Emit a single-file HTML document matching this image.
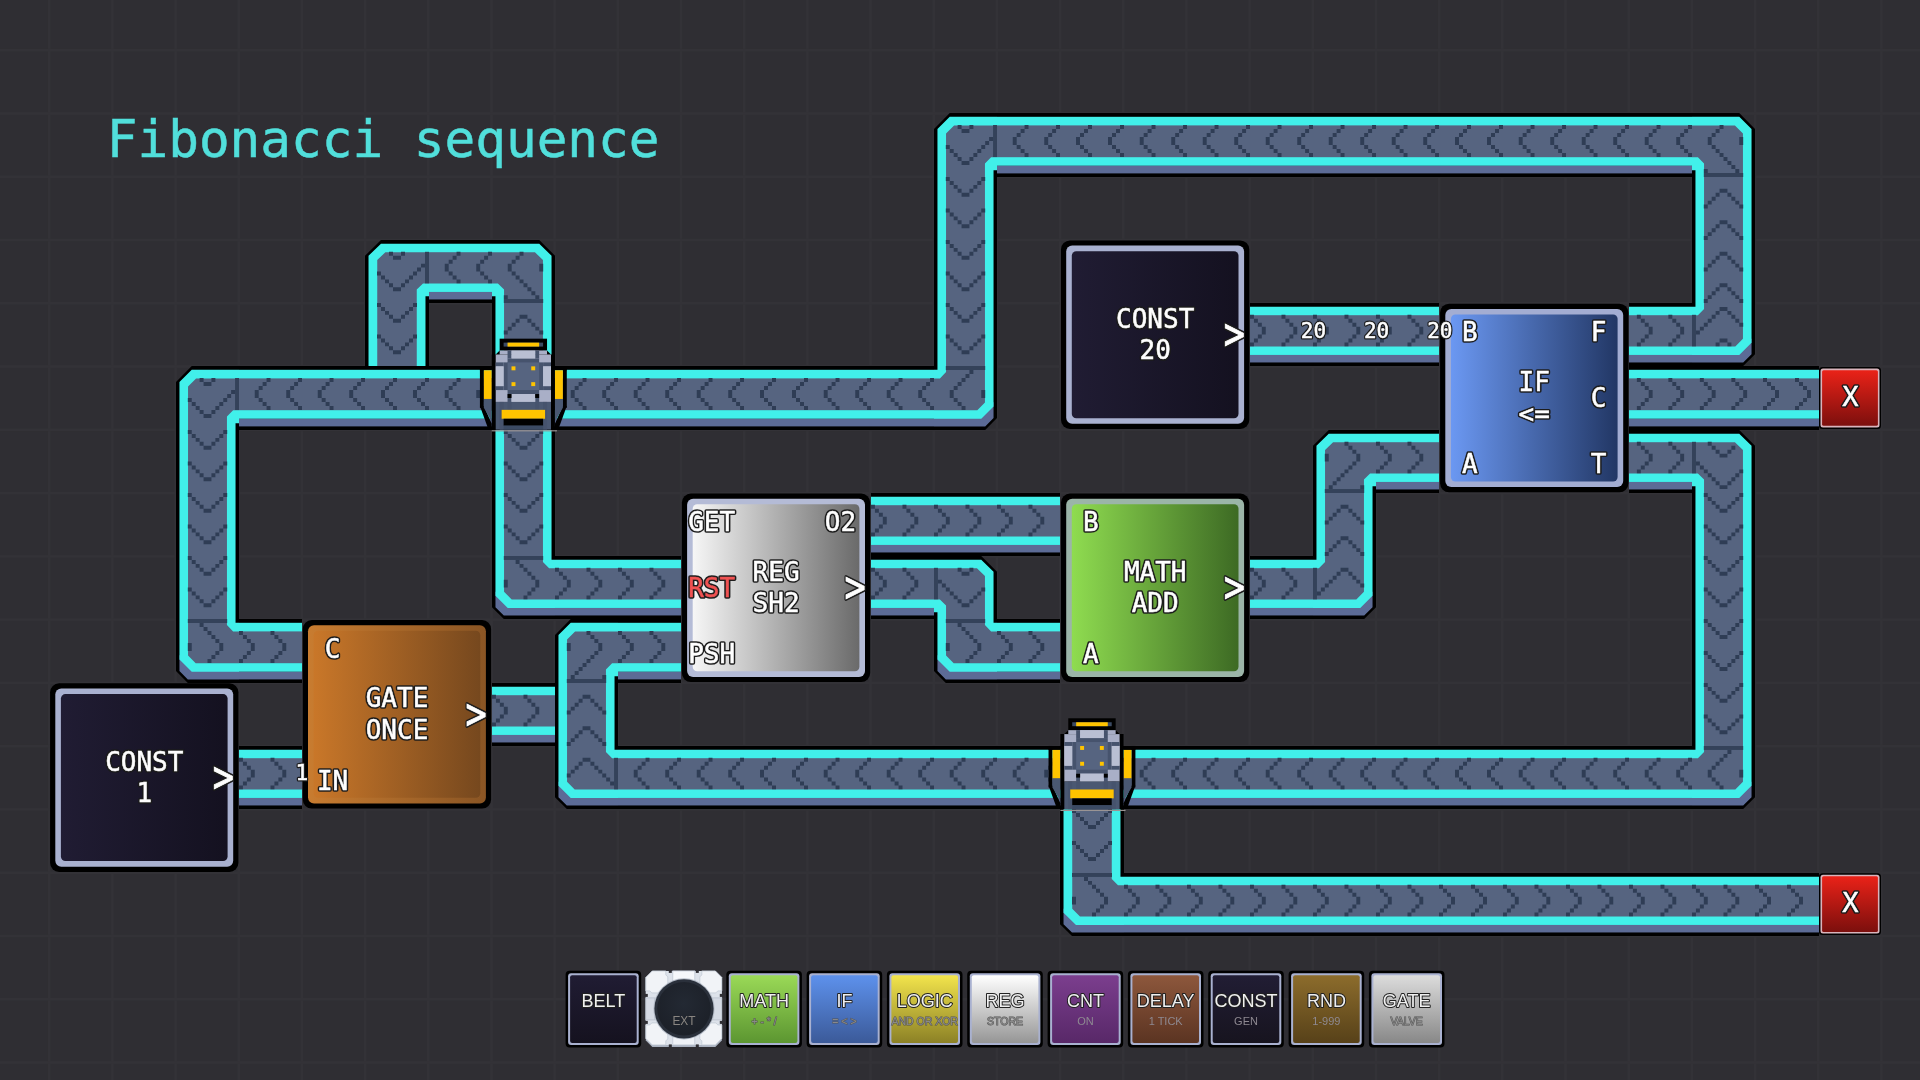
<!DOCTYPE html>
<html><head><meta charset="utf-8"><title>Fibonacci sequence</title>
<style>
html,body{margin:0;padding:0;background:#2f2e33;overflow:hidden}
svg{display:block}
text{font-family:"DejaVu Sans Mono","Liberation Mono",monospace}
.o{fill:#1d1d1d;stroke:#1d1d1d;stroke-width:3.6px;stroke-linejoin:round}
.o2{fill:#1d1d1d;stroke:#1d1d1d;stroke-width:3px;stroke-linejoin:round}
.f{stroke-width:0.5px}
.oa{fill:#1d1d1d;stroke:#1d1d1d;stroke-width:3.6px;stroke-linejoin:round}
.fa{fill:#fff;stroke:#fff;stroke-width:0.8px}
.t{stroke:#52e0dc;stroke-width:0.5px}
.s{font-family:"Liberation Sans",sans-serif}
.so{paint-order:stroke;stroke:#222;stroke-width:2px;stroke-linejoin:round}
.so2{paint-order:stroke;stroke:#555;stroke-width:1px}
</style></head><body>
<svg width="1920" height="1080" viewBox="0 0 1920 1080">
<defs>
<g id="hL"><rect x="0" y="0" width="16" height="16" fill="#000"/><rect x="0" y="0.95" width="16" height="12.25" fill="#41f0ea"/><rect x="0" y="3.1" width="16" height="7.95" fill="#566480"/><rect x="0" y="13.2" width="16" height="1.9" fill="#5c6b96"/><path d="M4 6h1v1h-1zM4 7h1v1h-1zM5 5h1v1h-1zM5 8h1v1h-1zM6 4h1v1h-1zM6 9h1v1h-1zM7 3h1v1h-1zM7 10h1v1h-1zM12 6h1v1h-1zM12 7h1v1h-1zM13 5h1v1h-1zM13 8h1v1h-1zM14 4h1v1h-1zM14 9h1v1h-1zM15 3h1v1h-1zM15 10h1v1h-1z" fill="#2f3d55"/></g>
<g id="hR"><rect x="0" y="0" width="16" height="16" fill="#000"/><rect x="0" y="0.95" width="16" height="12.25" fill="#41f0ea"/><rect x="0" y="3.1" width="16" height="7.95" fill="#566480"/><rect x="0" y="13.2" width="16" height="1.9" fill="#5c6b96"/><path d="M0 3h1v1h-1zM0 10h1v1h-1zM1 4h1v1h-1zM1 9h1v1h-1zM2 5h1v1h-1zM2 8h1v1h-1zM3 6h1v1h-1zM3 7h1v1h-1zM8 3h1v1h-1zM8 10h1v1h-1zM9 4h1v1h-1zM9 9h1v1h-1zM10 5h1v1h-1zM10 8h1v1h-1zM11 6h1v1h-1zM11 7h1v1h-1z" fill="#2f3d55"/></g>
<g id="vU"><rect x="0" y="0" width="16" height="16" fill="#000"/><rect x="0.88" y="0" width="14.24" height="16" fill="#41f0ea"/><rect x="3.06" y="0" width="9.88" height="16" fill="#566480"/><path d="M3 7h1v1h-1zM3 15h1v1h-1zM4 6h1v1h-1zM4 14h1v1h-1zM5 5h1v1h-1zM5 13h1v1h-1zM6 4h1v1h-1zM6 12h1v1h-1zM7 3h1v1h-1zM7 11h1v1h-1zM8 3h1v1h-1zM8 11h1v1h-1zM9 4h1v1h-1zM9 12h1v1h-1zM10 5h1v1h-1zM10 13h1v1h-1zM11 6h1v1h-1zM11 14h1v1h-1zM12 7h1v1h-1zM12 15h1v1h-1z" fill="#2f3d55"/></g>
<g id="vD"><rect x="0" y="0" width="16" height="16" fill="#000"/><rect x="0.88" y="0" width="14.24" height="16" fill="#41f0ea"/><rect x="3.06" y="0" width="9.88" height="16" fill="#566480"/><path d="M3 0h1v1h-1zM3 8h1v1h-1zM4 1h1v1h-1zM4 9h1v1h-1zM5 2h1v1h-1zM5 10h1v1h-1zM6 3h1v1h-1zM6 11h1v1h-1zM7 4h1v1h-1zM7 12h1v1h-1zM8 4h1v1h-1zM8 12h1v1h-1zM9 3h1v1h-1zM9 11h1v1h-1zM10 2h1v1h-1zM10 10h1v1h-1zM11 1h1v1h-1zM11 9h1v1h-1zM12 0h1v1h-1zM12 8h1v1h-1z" fill="#2f3d55"/></g>
<g id="hL_2"><rect x="0" y="0" width="16" height="16" fill="#000"/><rect x="0" y="0.95" width="16" height="12.25" fill="#41f0ea"/><rect x="0" y="3.1" width="16" height="7.95" fill="#566480"/><rect x="0" y="13.2" width="16" height="1.9" fill="#5c6b96"/><path d="M2 6h1v1h-1zM2 7h1v1h-1zM3 5h1v1h-1zM3 8h1v1h-1zM4 4h1v1h-1zM4 9h1v1h-1zM5 3h1v1h-1zM5 10h1v1h-1zM10 6h1v1h-1zM10 7h1v1h-1zM11 5h1v1h-1zM11 8h1v1h-1zM12 4h1v1h-1zM12 9h1v1h-1zM13 3h1v1h-1zM13 10h1v1h-1z" fill="#2f3d55"/></g>
<g id="hR_2"><rect x="0" y="0" width="16" height="16" fill="#000"/><rect x="0" y="0.95" width="16" height="12.25" fill="#41f0ea"/><rect x="0" y="3.1" width="16" height="7.95" fill="#566480"/><rect x="0" y="13.2" width="16" height="1.9" fill="#5c6b96"/><path d="M2 3h1v1h-1zM2 10h1v1h-1zM3 4h1v1h-1zM3 9h1v1h-1zM4 5h1v1h-1zM4 8h1v1h-1zM5 6h1v1h-1zM5 7h1v1h-1zM10 3h1v1h-1zM10 10h1v1h-1zM11 4h1v1h-1zM11 9h1v1h-1zM12 5h1v1h-1zM12 8h1v1h-1zM13 6h1v1h-1zM13 7h1v1h-1z" fill="#2f3d55"/></g>
<g id="vU_2"><rect x="0" y="0" width="16" height="16" fill="#000"/><rect x="0.88" y="0" width="14.24" height="16" fill="#41f0ea"/><rect x="3.06" y="0" width="9.88" height="16" fill="#566480"/><path d="M3 5h1v1h-1zM3 13h1v1h-1zM4 4h1v1h-1zM4 12h1v1h-1zM5 3h1v1h-1zM5 11h1v1h-1zM6 2h1v1h-1zM6 10h1v1h-1zM7 1h1v1h-1zM7 9h1v1h-1zM8 1h1v1h-1zM8 9h1v1h-1zM9 2h1v1h-1zM9 10h1v1h-1zM10 3h1v1h-1zM10 11h1v1h-1zM11 4h1v1h-1zM11 12h1v1h-1zM12 5h1v1h-1zM12 13h1v1h-1z" fill="#2f3d55"/></g>
<g id="vD_2"><rect x="0" y="0" width="16" height="16" fill="#000"/><rect x="0.88" y="0" width="14.24" height="16" fill="#41f0ea"/><rect x="3.06" y="0" width="9.88" height="16" fill="#566480"/><path d="M3 2h1v1h-1zM3 10h1v1h-1zM4 3h1v1h-1zM4 11h1v1h-1zM5 4h1v1h-1zM5 12h1v1h-1zM6 5h1v1h-1zM6 13h1v1h-1zM7 6h1v1h-1zM7 14h1v1h-1zM8 6h1v1h-1zM8 14h1v1h-1zM9 5h1v1h-1zM9 13h1v1h-1zM10 4h1v1h-1zM10 12h1v1h-1zM11 3h1v1h-1zM11 11h1v1h-1zM12 2h1v1h-1zM12 10h1v1h-1z" fill="#2f3d55"/></g>
<g id="cDR_D"><polygon points="4,0 16,0 16,16 0,16 0,4" fill="#000"/><polygon points="4,0.95 16,0.95 16,14.3 15.12,14.3 15.12,16 0.88,16 0.88,4" fill="#41f0ea"/><polygon points="5.1,3.1 16,3.1 16,11.05 14.5,11.05 12.94,12.6 12.94,16 3.06,16 3.06,5.1" fill="#566480"/><rect x="15" y="3" width="1" height="8" fill="#34425a"/><path d="M3 8h1v1h-1zM4 9h1v1h-1zM5 10h1v1h-1zM6 3h1v1h-1zM6 11h1v1h-1zM7 4h1v1h-1zM7 12h1v1h-1zM8 4h1v1h-1zM8 12h1v1h-1zM9 3h1v1h-1zM9 11h1v1h-1zM10 10h1v1h-1zM11 9h1v1h-1zM12 8h1v1h-1zM13 7h1v1h-1zM14 6h1v1h-1z" fill="#2f3d55"/></g>
<g id="cDR_R"><polygon points="4,0 16,0 16,16 0,16 0,4" fill="#000"/><polygon points="4,0.95 16,0.95 16,14.3 15.12,14.3 15.12,16 0.88,16 0.88,4" fill="#41f0ea"/><polygon points="5.1,3.1 16,3.1 16,11.05 14.5,11.05 12.94,12.6 12.94,16 3.06,16 3.06,5.1" fill="#566480"/><rect x="3" y="15" width="10" height="1" fill="#34425a"/><path d="M3 6h1v1h-1zM3 7h1v1h-1zM4 14h1v1h-1zM5 13h1v1h-1zM6 12h1v1h-1zM7 11h1v1h-1zM8 3h1v1h-1zM8 10h1v1h-1zM9 4h1v1h-1zM9 9h1v1h-1zM10 5h1v1h-1zM10 8h1v1h-1zM11 6h1v1h-1zM11 7h1v1h-1zM12 14h1v1h-1z" fill="#2f3d55"/></g>
<g id="cDL_D"><polygon points="12,0 0,0 0,16 16,16 16,4" fill="#000"/><polygon points="12,0.95 0,0.95 0,14.3 0.88,14.3 0.88,16 15.12,16 15.12,4" fill="#41f0ea"/><polygon points="10.9,3.1 0,3.1 0,11.05 1.5,11.05 3.06,12.6 3.06,16 12.94,16 12.94,5.1" fill="#566480"/><rect x="0" y="3" width="1" height="8" fill="#34425a"/><path d="M1 6h1v1h-1zM2 7h1v1h-1zM3 8h1v1h-1zM4 9h1v1h-1zM5 10h1v1h-1zM6 3h1v1h-1zM6 11h1v1h-1zM7 4h1v1h-1zM7 12h1v1h-1zM8 4h1v1h-1zM8 12h1v1h-1zM9 3h1v1h-1zM9 11h1v1h-1zM10 10h1v1h-1zM11 9h1v1h-1zM12 8h1v1h-1z" fill="#2f3d55"/></g>
<g id="cDL_L"><polygon points="12,0 0,0 0,16 16,16 16,4" fill="#000"/><polygon points="12,0.95 0,0.95 0,14.3 0.88,14.3 0.88,16 15.12,16 15.12,4" fill="#41f0ea"/><polygon points="10.9,3.1 0,3.1 0,11.05 1.5,11.05 3.06,12.6 3.06,16 12.94,16 12.94,5.1" fill="#566480"/><rect x="3" y="15" width="10" height="1" fill="#34425a"/><path d="M3 14h1v1h-1zM4 6h1v1h-1zM4 7h1v1h-1zM5 5h1v1h-1zM5 8h1v1h-1zM6 4h1v1h-1zM6 9h1v1h-1zM7 3h1v1h-1zM7 10h1v1h-1zM8 11h1v1h-1zM9 12h1v1h-1zM10 13h1v1h-1zM11 14h1v1h-1zM12 6h1v1h-1zM12 7h1v1h-1z" fill="#2f3d55"/></g>
<g id="cUR_U"><polygon points="0,0 16,0 16,16 3,16 0,13" fill="#000"/><polygon points="0.88,9 0.88,13 3,15.1 16,15.1 16,12 4,12" fill="#5c6b96"/><polygon points="0.88,0 15.12,0 15.12,0.95 16,0.95 16,13.2 4,13.2 0.88,10.1" fill="#41f0ea"/><polygon points="3.06,0 12.94,0 12.94,1.5 14.5,3.1 16,3.1 16,11.05 5,11.05 3.06,9.1" fill="#566480"/><rect x="15" y="3" width="1" height="8" fill="#34425a"/><path d="M3 7h1v1h-1zM4 6h1v1h-1zM5 5h1v1h-1zM6 4h1v1h-1zM7 3h1v1h-1zM8 3h1v1h-1zM9 4h1v1h-1zM10 5h1v1h-1zM11 6h1v1h-1zM12 7h1v1h-1zM13 8h1v1h-1zM14 9h1v1h-1z" fill="#2f3d55"/></g>
<g id="cUR_R"><polygon points="0,0 16,0 16,16 3,16 0,13" fill="#000"/><polygon points="0.88,9 0.88,13 3,15.1 16,15.1 16,12 4,12" fill="#5c6b96"/><polygon points="0.88,0 15.12,0 15.12,0.95 16,0.95 16,13.2 4,13.2 0.88,10.1" fill="#41f0ea"/><polygon points="3.06,0 12.94,0 12.94,1.5 14.5,3.1 16,3.1 16,11.05 5,11.05 3.06,9.1" fill="#566480"/><rect x="3" y="0" width="10" height="1" fill="#34425a"/><path d="M3 6h1v1h-1zM3 7h1v1h-1zM6 1h1v1h-1zM7 2h1v1h-1zM8 3h1v1h-1zM8 10h1v1h-1zM9 4h1v1h-1zM9 9h1v1h-1zM10 5h1v1h-1zM10 8h1v1h-1zM11 6h1v1h-1zM11 7h1v1h-1z" fill="#2f3d55"/></g>
<g id="cUL_U"><polygon points="16,0 0,0 0,16 13,16 16,13" fill="#000"/><polygon points="15.12,9 15.12,13 13,15.1 0,15.1 0,12 12,12" fill="#5c6b96"/><polygon points="15.12,0 0.88,0 0.88,0.95 0,0.95 0,13.2 12,13.2 15.12,10.1" fill="#41f0ea"/><polygon points="12.94,0 3.06,0 3.06,1.5 1.5,3.1 0,3.1 0,11.05 11,11.05 12.94,9.1" fill="#566480"/><rect x="0" y="3" width="1" height="8" fill="#34425a"/><path d="M1 9h1v1h-1zM2 8h1v1h-1zM3 7h1v1h-1zM4 6h1v1h-1zM5 5h1v1h-1zM6 4h1v1h-1zM7 3h1v1h-1zM8 3h1v1h-1zM9 4h1v1h-1zM10 5h1v1h-1zM11 6h1v1h-1zM12 7h1v1h-1z" fill="#2f3d55"/></g>
<g id="cUL_L"><polygon points="16,0 0,0 0,16 13,16 16,13" fill="#000"/><polygon points="15.12,9 15.12,13 13,15.1 0,15.1 0,12 12,12" fill="#5c6b96"/><polygon points="15.12,0 0.88,0 0.88,0.95 0,0.95 0,13.2 12,13.2 15.12,10.1" fill="#41f0ea"/><polygon points="12.94,0 3.06,0 3.06,1.5 1.5,3.1 0,3.1 0,11.05 11,11.05 12.94,9.1" fill="#566480"/><rect x="3" y="0" width="10" height="1" fill="#34425a"/><path d="M4 6h1v1h-1zM4 7h1v1h-1zM5 5h1v1h-1zM5 8h1v1h-1zM6 4h1v1h-1zM6 9h1v1h-1zM7 3h1v1h-1zM7 10h1v1h-1zM8 2h1v1h-1zM9 1h1v1h-1zM12 6h1v1h-1zM12 7h1v1h-1z" fill="#2f3d55"/></g>
<g id="cUL_U_2"><polygon points="16,0 0,0 0,16 13,16 16,13" fill="#000"/><polygon points="15.12,9 15.12,13 13,15.1 0,15.1 0,12 12,12" fill="#5c6b96"/><polygon points="15.12,0 0.88,0 0.88,0.95 0,0.95 0,13.2 12,13.2 15.12,10.1" fill="#41f0ea"/><polygon points="12.94,0 3.06,0 3.06,1.5 1.5,3.1 0,3.1 0,11.05 11,11.05 12.94,9.1" fill="#566480"/><rect x="0" y="3" width="1" height="8" fill="#34425a"/><path d="M1 7h1v1h-1zM2 6h1v1h-1zM3 5h1v1h-1zM4 4h1v1h-1zM5 3h1v1h-1zM6 2h1v1h-1zM6 10h1v1h-1zM7 1h1v1h-1zM7 9h1v1h-1zM8 1h1v1h-1zM8 9h1v1h-1zM9 2h1v1h-1zM9 10h1v1h-1zM10 3h1v1h-1zM11 4h1v1h-1zM12 5h1v1h-1z" fill="#2f3d55"/></g>
<g id="cDL_D_2"><polygon points="12,0 0,0 0,16 16,16 16,4" fill="#000"/><polygon points="12,0.95 0,0.95 0,14.3 0.88,14.3 0.88,16 15.12,16 15.12,4" fill="#41f0ea"/><polygon points="10.9,3.1 0,3.1 0,11.05 1.5,11.05 3.06,12.6 3.06,16 12.94,16 12.94,5.1" fill="#566480"/><rect x="0" y="3" width="1" height="8" fill="#34425a"/><path d="M1 8h1v1h-1zM2 9h1v1h-1zM3 10h1v1h-1zM4 3h1v1h-1zM4 11h1v1h-1zM5 4h1v1h-1zM5 12h1v1h-1zM6 5h1v1h-1zM6 13h1v1h-1zM7 6h1v1h-1zM7 14h1v1h-1zM8 6h1v1h-1zM8 14h1v1h-1zM9 5h1v1h-1zM9 13h1v1h-1zM10 4h1v1h-1zM10 12h1v1h-1zM11 11h1v1h-1zM12 10h1v1h-1z" fill="#2f3d55"/></g>
<g id="dev"><rect x="-6" y="0" width="6" height="2" fill="#000"/><rect x="-6" y="0" width="2" height="21" fill="#000"/><rect x="-4" y="2" width="4" height="14.5" fill="#ffc400"/><rect x="-4" y="16.5" width="4" height="6" fill="#4a5872"/><polygon points="-6,20 -4,20 0,29 0,31 -2,31" fill="#000"/><polygon points="-4,16.5 0,16.5 0,28 -4,21" fill="#4a5872"/><rect x="32" y="0" width="6" height="2" fill="#000"/><rect x="36" y="0" width="2" height="21" fill="#000"/><rect x="32" y="2" width="4" height="14.5" fill="#ffc400"/><rect x="32" y="16.5" width="4" height="6" fill="#4a5872"/><polygon points="38,20 36,20 32,29 32,31 34,31" fill="#000"/><polygon points="36,16.5 32,16.5 32,28 36,21" fill="#4a5872"/><rect x="4" y="-14" width="24" height="6" fill="#000"/><rect x="6" y="-12" width="20" height="2" fill="#3b4a63"/><rect x="8" y="-12" width="16" height="2" fill="#ffc400"/><polygon points="4,-8 28,-8 30,-6 32,-6 32,32 0,32 0,-6 2,-6" fill="#000"/><rect x="2" y="-6" width="28" height="24" fill="#a9afc7"/><rect x="4" y="-8" width="24" height="2" fill="#a9afc7"/><rect x="8" y="-4" width="16" height="18" fill="#46536d"/><rect x="6" y="-2" width="20" height="14" fill="#46536d"/><rect x="8" y="-2" width="16" height="14" fill="#566480"/><rect x="8" y="-8" width="2" height="4" fill="#46536d"/><rect x="22" y="-8" width="2" height="4" fill="#46536d"/><rect x="2" y="-2" width="4" height="2" fill="#46536d"/><rect x="26" y="-2" width="4" height="2" fill="#46536d"/><rect x="2" y="10" width="4" height="2" fill="#46536d"/><rect x="26" y="10" width="4" height="2" fill="#46536d"/><rect x="8" y="14" width="2" height="4" fill="#46536d"/><rect x="22" y="14" width="2" height="4" fill="#46536d"/><rect x="10" y="-8" width="12" height="4" fill="#b9bfd3"/><rect x="10" y="14" width="12" height="4" fill="#b9bfd3"/><rect x="2" y="0" width="4" height="10" fill="#b9bfd3"/><rect x="26" y="0" width="4" height="10" fill="#b9bfd3"/><rect x="10" y="0" width="2" height="2" fill="#ffc400"/><rect x="20" y="0" width="2" height="2" fill="#ffc400"/><rect x="10" y="8" width="2" height="2" fill="#ffc400"/><rect x="20" y="8" width="2" height="2" fill="#ffc400"/><rect x="8" y="14" width="2" height="2" fill="#000"/><rect x="22" y="14" width="2" height="2" fill="#000"/><rect x="2" y="18" width="28" height="14" fill="#4a5872"/><rect x="8" y="18" width="2" height="4" fill="#46536d"/><rect x="22" y="18" width="2" height="4" fill="#46536d"/><rect x="4" y="18" width="2" height="14" fill="#46536d"/><rect x="26" y="18" width="2" height="14" fill="#46536d"/><rect x="5" y="22" width="22" height="4.5" fill="#ffc400"/><rect x="6" y="26.5" width="20" height="3.5" fill="#000"/><rect x="6" y="30" width="20" height="2" fill="#3b4a63"/><rect x="0" y="32.3" width="33" height="0.6" fill="#9a9494"/></g>
<linearGradient id="gc1" x1="0" y1="0" x2="1" y2="0"><stop offset="0" stop-color="#201c33"/><stop offset="1" stop-color="#141120"/></linearGradient>
<linearGradient id="ggt" x1="0" y1="0" x2="1" y2="0"><stop offset="0" stop-color="#c97729"/><stop offset="1" stop-color="#76481e"/></linearGradient>
<linearGradient id="grg" x1="0" y1="0" x2="1" y2="0"><stop offset="0" stop-color="#f6f6f6"/><stop offset="1" stop-color="#6a6a6a"/></linearGradient>
<linearGradient id="gma" x1="0" y1="0" x2="1" y2="0"><stop offset="0" stop-color="#8fdc50"/><stop offset="1" stop-color="#3d6a24"/></linearGradient>
<linearGradient id="gc2" x1="0" y1="0" x2="1" y2="0"><stop offset="0" stop-color="#201c33"/><stop offset="1" stop-color="#141120"/></linearGradient>
<linearGradient id="gif" x1="0" y1="0" x2="1" y2="0"><stop offset="0" stop-color="#6b98f2"/><stop offset="1" stop-color="#223765"/></linearGradient>
<linearGradient id="ggtb" x1="0" y1="0" x2="1" y2="0"><stop offset="0" stop-color="#c87c30"/><stop offset="1" stop-color="#8a5524"/></linearGradient>
<radialGradient id="gext" cx="0.5" cy="0.4" r="0.6"><stop offset="0" stop-color="#232933"/><stop offset="1" stop-color="#1c2028"/></radialGradient>
<linearGradient id="gx" x1="0" y1="0" x2="0" y2="1"><stop offset="0" stop-color="#ea2218"/><stop offset="1" stop-color="#7c0f0d"/></linearGradient>
<linearGradient id="tb0" x1="0" y1="0" x2="0" y2="1"><stop offset="0" stop-color="#201c33"/><stop offset="1" stop-color="#15121f"/></linearGradient>
<linearGradient id="tb2" x1="0" y1="0" x2="0" y2="1"><stop offset="0" stop-color="#9ad957"/><stop offset="1" stop-color="#5c9631"/></linearGradient>
<linearGradient id="tb3" x1="0" y1="0" x2="0" y2="1"><stop offset="0" stop-color="#5d91ec"/><stop offset="1" stop-color="#3b5a99"/></linearGradient>
<linearGradient id="tb4" x1="0" y1="0" x2="0" y2="1"><stop offset="0" stop-color="#f2e44c"/><stop offset="1" stop-color="#8c8126"/></linearGradient>
<linearGradient id="tb5" x1="0" y1="0" x2="0" y2="1"><stop offset="0" stop-color="#ffffff"/><stop offset="1" stop-color="#969696"/></linearGradient>
<linearGradient id="tb6" x1="0" y1="0" x2="0" y2="1"><stop offset="0" stop-color="#7b3e8e"/><stop offset="1" stop-color="#582868"/></linearGradient>
<linearGradient id="tb7" x1="0" y1="0" x2="0" y2="1"><stop offset="0" stop-color="#8d573c"/><stop offset="1" stop-color="#5b3422"/></linearGradient>
<linearGradient id="tb8" x1="0" y1="0" x2="0" y2="1"><stop offset="0" stop-color="#211d34"/><stop offset="1" stop-color="#17141f"/></linearGradient>
<linearGradient id="tb9" x1="0" y1="0" x2="0" y2="1"><stop offset="0" stop-color="#8c6c2c"/><stop offset="1" stop-color="#574119"/></linearGradient>
<linearGradient id="tb10" x1="0" y1="0" x2="0" y2="1"><stop offset="0" stop-color="#dcdcdc"/><stop offset="1" stop-color="#888888"/></linearGradient>
</defs>
<rect width="1920" height="1080" fill="#2f2e33"/>
<g><rect x="47.9" y="0" width="2.6" height="1080" fill="#333237"/><rect x="111.1" y="0" width="2.6" height="1080" fill="#333237"/><rect x="174.3" y="0" width="2.6" height="1080" fill="#333237"/><rect x="237.4" y="0" width="2.6" height="1080" fill="#333237"/><rect x="300.6" y="0" width="2.6" height="1080" fill="#333237"/><rect x="363.8" y="0" width="2.6" height="1080" fill="#333237"/><rect x="427.0" y="0" width="2.6" height="1080" fill="#333237"/><rect x="490.2" y="0" width="2.6" height="1080" fill="#333237"/><rect x="553.3" y="0" width="2.6" height="1080" fill="#333237"/><rect x="616.5" y="0" width="2.6" height="1080" fill="#333237"/><rect x="679.7" y="0" width="2.6" height="1080" fill="#333237"/><rect x="742.9" y="0" width="2.6" height="1080" fill="#333237"/><rect x="806.1" y="0" width="2.6" height="1080" fill="#333237"/><rect x="869.2" y="0" width="2.6" height="1080" fill="#333237"/><rect x="932.4" y="0" width="2.6" height="1080" fill="#333237"/><rect x="995.6" y="0" width="2.6" height="1080" fill="#333237"/><rect x="1058.8" y="0" width="2.6" height="1080" fill="#333237"/><rect x="1122.0" y="0" width="2.6" height="1080" fill="#333237"/><rect x="1185.1" y="0" width="2.6" height="1080" fill="#333237"/><rect x="1248.3" y="0" width="2.6" height="1080" fill="#333237"/><rect x="1311.5" y="0" width="2.6" height="1080" fill="#333237"/><rect x="1374.7" y="0" width="2.6" height="1080" fill="#333237"/><rect x="1437.9" y="0" width="2.6" height="1080" fill="#333237"/><rect x="1501.0" y="0" width="2.6" height="1080" fill="#333237"/><rect x="1564.2" y="0" width="2.6" height="1080" fill="#333237"/><rect x="1627.4" y="0" width="2.6" height="1080" fill="#333237"/><rect x="1690.6" y="0" width="2.6" height="1080" fill="#333237"/><rect x="1753.8" y="0" width="2.6" height="1080" fill="#333237"/><rect x="1816.9" y="0" width="2.6" height="1080" fill="#333237"/><rect x="1880.1" y="0" width="2.6" height="1080" fill="#333237"/><rect x="0" y="48.9" width="1920" height="2.6" fill="#333237"/><rect x="0" y="112.2" width="1920" height="2.6" fill="#333237"/><rect x="0" y="175.4" width="1920" height="2.6" fill="#333237"/><rect x="0" y="238.7" width="1920" height="2.6" fill="#333237"/><rect x="0" y="302.0" width="1920" height="2.6" fill="#333237"/><rect x="0" y="365.2" width="1920" height="2.6" fill="#333237"/><rect x="0" y="428.5" width="1920" height="2.6" fill="#333237"/><rect x="0" y="491.8" width="1920" height="2.6" fill="#333237"/><rect x="0" y="555.1" width="1920" height="2.6" fill="#333237"/><rect x="0" y="618.3" width="1920" height="2.6" fill="#333237"/><rect x="0" y="681.6" width="1920" height="2.6" fill="#333237"/><rect x="0" y="744.9" width="1920" height="2.6" fill="#333237"/><rect x="0" y="808.1" width="1920" height="2.6" fill="#333237"/><rect x="0" y="871.4" width="1920" height="2.6" fill="#333237"/><rect x="0" y="934.7" width="1920" height="2.6" fill="#333237"/><rect x="0" y="998.0" width="1920" height="2.6" fill="#333237"/><rect x="0" y="1061.2" width="1920" height="2.6" fill="#333237"/></g>
<g><use href="#hR" transform="translate(239 746) scale(3.93750 3.93750)"/>
<use href="#hR" transform="translate(492 683) scale(3.93750 3.93750)"/>
<use href="#cDR_D" transform="translate(365 240) scale(4.00000 3.93750)"/>
<use href="#hL" transform="translate(429 240) scale(3.93750 3.93750)"/>
<use href="#cDL_L" transform="translate(492 240) scale(3.93750 3.93750)"/>
<use href="#vD" transform="translate(365 303) scale(4.00000 3.93750)"/>
<use href="#vU" transform="translate(492 303) scale(3.93750 3.93750)"/>
<use href="#cDR_D" transform="translate(176 366) scale(3.93750 4.00000)"/>
<use href="#hL" transform="translate(239 366) scale(3.93750 4.00000)"/>
<use href="#hL" transform="translate(302 366) scale(3.93750 4.00000)"/>
<use href="#hL" transform="translate(365 366) scale(4.00000 4.00000)"/>
<use href="#hL" transform="translate(429 366) scale(3.93750 4.00000)"/>
<use href="#hL" transform="translate(555 366) scale(3.93750 4.00000)"/>
<use href="#hL" transform="translate(618 366) scale(3.93750 4.00000)"/>
<use href="#hL" transform="translate(681 366) scale(3.93750 4.00000)"/>
<use href="#hL" transform="translate(744 366) scale(4.00000 4.00000)"/>
<use href="#hL" transform="translate(808 366) scale(3.93750 4.00000)"/>
<use href="#hL" transform="translate(871 366) scale(3.93750 4.00000)"/>
<use href="#cUL_L" transform="translate(934 366) scale(3.93750 4.00000)"/>
<use href="#vD" transform="translate(176 430) scale(3.93750 3.93750)"/>
<use href="#vD" transform="translate(176 493) scale(3.93750 3.93750)"/>
<use href="#vD" transform="translate(176 556) scale(3.93750 3.93750)"/>
<use href="#cUR_R" transform="translate(176 619) scale(3.93750 4.00000)"/>
<use href="#hR" transform="translate(239 619) scale(3.93750 4.00000)"/>
<use href="#vD" transform="translate(934 177) scale(3.93750 3.93750)"/>
<use href="#vD" transform="translate(934 240) scale(3.93750 3.93750)"/>
<use href="#vD" transform="translate(934 303) scale(3.93750 3.93750)"/>
<use href="#cDR_D" transform="translate(934 113) scale(3.93750 4.00000)"/>
<use href="#hL" transform="translate(997 113) scale(3.93750 4.00000)"/>
<use href="#hL" transform="translate(1060 113) scale(4.00000 4.00000)"/>
<use href="#hL" transform="translate(1124 113) scale(3.93750 4.00000)"/>
<use href="#hL" transform="translate(1187 113) scale(3.93750 4.00000)"/>
<use href="#hL" transform="translate(1250 113) scale(3.93750 4.00000)"/>
<use href="#hL" transform="translate(1313 113) scale(3.93750 4.00000)"/>
<use href="#hL" transform="translate(1376 113) scale(3.93750 4.00000)"/>
<use href="#hL" transform="translate(1439 113) scale(4.00000 4.00000)"/>
<use href="#hL" transform="translate(1503 113) scale(3.93750 4.00000)"/>
<use href="#hL" transform="translate(1566 113) scale(3.93750 4.00000)"/>
<use href="#hL" transform="translate(1629 113) scale(3.93750 4.00000)"/>
<use href="#cDL_L" transform="translate(1692 113) scale(3.93750 4.00000)"/>
<use href="#vU" transform="translate(1692 177) scale(3.93750 3.93750)"/>
<use href="#vU" transform="translate(1692 240) scale(3.93750 3.93750)"/>
<use href="#cUL_U_2" transform="translate(1692 303) scale(3.93750 3.93750)"/>
<use href="#hR_2" transform="translate(1629 303) scale(3.93750 3.93750)"/>
<use href="#hR_2" transform="translate(1629 366) scale(3.93750 4.00000)"/>
<use href="#hR_2" transform="translate(1692 366) scale(3.93750 4.00000)"/>
<use href="#hR_2" transform="translate(1755 366) scale(4.00000 4.00000)"/>
<use href="#hR_2" transform="translate(1629 430) scale(3.93750 3.93750)"/>
<use href="#cDL_D_2" transform="translate(1692 430) scale(3.93750 3.93750)"/>
<use href="#vD" transform="translate(1692 493) scale(3.93750 3.93750)"/>
<use href="#vD" transform="translate(1692 556) scale(3.93750 3.93750)"/>
<use href="#vD" transform="translate(1692 619) scale(3.93750 4.00000)"/>
<use href="#vD" transform="translate(1692 683) scale(3.93750 3.93750)"/>
<use href="#cUL_L" transform="translate(1692 746) scale(3.93750 3.93750)"/>
<use href="#hL" transform="translate(618 746) scale(3.93750 3.93750)"/>
<use href="#hL" transform="translate(681 746) scale(3.93750 3.93750)"/>
<use href="#hL" transform="translate(744 746) scale(4.00000 3.93750)"/>
<use href="#hL" transform="translate(808 746) scale(3.93750 3.93750)"/>
<use href="#hL" transform="translate(871 746) scale(3.93750 3.93750)"/>
<use href="#hL" transform="translate(934 746) scale(3.93750 3.93750)"/>
<use href="#hL" transform="translate(997 746) scale(3.93750 3.93750)"/>
<use href="#hL" transform="translate(1124 746) scale(3.93750 3.93750)"/>
<use href="#hL" transform="translate(1187 746) scale(3.93750 3.93750)"/>
<use href="#hL" transform="translate(1250 746) scale(3.93750 3.93750)"/>
<use href="#hL" transform="translate(1313 746) scale(3.93750 3.93750)"/>
<use href="#hL" transform="translate(1376 746) scale(3.93750 3.93750)"/>
<use href="#hL" transform="translate(1439 746) scale(4.00000 3.93750)"/>
<use href="#hL" transform="translate(1503 746) scale(3.93750 3.93750)"/>
<use href="#hL" transform="translate(1566 746) scale(3.93750 3.93750)"/>
<use href="#hL" transform="translate(1629 746) scale(3.93750 3.93750)"/>
<use href="#cUR_U" transform="translate(555 746) scale(3.93750 3.93750)"/>
<use href="#vU" transform="translate(555 683) scale(3.93750 3.93750)"/>
<use href="#cDR_R" transform="translate(555 619) scale(3.93750 4.00000)"/>
<use href="#hR" transform="translate(618 619) scale(3.93750 4.00000)"/>
<use href="#vD" transform="translate(492 430) scale(3.93750 3.93750)"/>
<use href="#vD" transform="translate(492 493) scale(3.93750 3.93750)"/>
<use href="#cUR_R" transform="translate(492 556) scale(3.93750 3.93750)"/>
<use href="#hR" transform="translate(555 556) scale(3.93750 3.93750)"/>
<use href="#hR" transform="translate(618 556) scale(3.93750 3.93750)"/>
<use href="#hR" transform="translate(871 493) scale(3.93750 3.93750)"/>
<use href="#hR" transform="translate(934 493) scale(3.93750 3.93750)"/>
<use href="#hR" transform="translate(997 493) scale(3.93750 3.93750)"/>
<use href="#hR" transform="translate(871 556) scale(3.93750 3.93750)"/>
<use href="#cDL_D" transform="translate(934 556) scale(3.93750 3.93750)"/>
<use href="#cUR_R" transform="translate(934 619) scale(3.93750 4.00000)"/>
<use href="#hR" transform="translate(997 619) scale(3.93750 4.00000)"/>
<use href="#hR" transform="translate(1250 556) scale(3.93750 3.93750)"/>
<use href="#cUL_U" transform="translate(1313 556) scale(3.93750 3.93750)"/>
<use href="#vU" transform="translate(1313 493) scale(3.93750 3.93750)"/>
<use href="#cDR_R" transform="translate(1313 430) scale(3.93750 3.93750)"/>
<use href="#hR" transform="translate(1376 430) scale(3.93750 3.93750)"/>
<use href="#hR" transform="translate(1250 303) scale(3.93750 3.93750)"/>
<use href="#hR" transform="translate(1313 303) scale(3.93750 3.93750)"/>
<use href="#hR" transform="translate(1376 303) scale(3.93750 3.93750)"/>
<use href="#vD" transform="translate(1060 809) scale(4.00000 4.00000)"/>
<use href="#cUR_R" transform="translate(1060 873) scale(4.00000 3.93750)"/>
<use href="#hR" transform="translate(1124 873) scale(3.93750 3.93750)"/>
<use href="#hR" transform="translate(1187 873) scale(3.93750 3.93750)"/>
<use href="#hR" transform="translate(1250 873) scale(3.93750 3.93750)"/>
<use href="#hR" transform="translate(1313 873) scale(3.93750 3.93750)"/>
<use href="#hR" transform="translate(1376 873) scale(3.93750 3.93750)"/>
<use href="#hR" transform="translate(1439 873) scale(4.00000 3.93750)"/>
<use href="#hR" transform="translate(1503 873) scale(3.93750 3.93750)"/>
<use href="#hR" transform="translate(1566 873) scale(3.93750 3.93750)"/>
<use href="#hR" transform="translate(1629 873) scale(3.93750 3.93750)"/>
<use href="#hR" transform="translate(1692 873) scale(3.93750 3.93750)"/>
<use href="#hR" transform="translate(1755 873) scale(4.00000 3.93750)"/>
<use href="#hL" transform="translate(492 366) scale(3.93750 4.00000)"/>
<use href="#hL" transform="translate(1060 746) scale(4.00000 3.93750)"/></g>
<g><use href="#dev" transform="translate(491.76 366.35) scale(1.97437 1.97719)"/>
<use href="#dev" transform="translate(1060.38 745.97) scale(1.97437 1.97719)"/></g>
<g><rect x="50.1" y="683.3" width="188.3" height="188.6" rx="9" fill="#000"/>
<rect x="55.3" y="688.5" width="177.9" height="178.2" rx="6" fill="#a9b1d0"/>
<rect x="60.9" y="694.1" width="166.7" height="167.0" rx="4.5" fill="url(#gc1)"/>
<rect x="302.8" y="620.0" width="188.3" height="188.6" rx="9" fill="#000"/>
<rect x="308.0" y="625.2" width="177.9" height="178.2" rx="6" fill="url(#ggtb)"/>
<rect x="313.6" y="630.8" width="166.7" height="167.0" rx="4.5" fill="url(#ggt)"/>
<rect x="681.9" y="493.5" width="188.3" height="188.6" rx="9" fill="#000"/>
<rect x="687.1" y="498.7" width="177.9" height="178.2" rx="6" fill="#b4bbd6"/>
<rect x="692.7" y="504.3" width="166.7" height="167.0" rx="4.5" fill="url(#grg)"/>
<rect x="1061.0" y="493.5" width="188.3" height="188.6" rx="9" fill="#000"/>
<rect x="1066.2" y="498.7" width="177.9" height="178.2" rx="6" fill="#9bb5a8"/>
<rect x="1071.8" y="504.3" width="166.7" height="167.0" rx="4.5" fill="url(#gma)"/>
<rect x="1061.0" y="240.4" width="188.3" height="188.6" rx="9" fill="#000"/>
<rect x="1066.2" y="245.6" width="177.9" height="178.2" rx="6" fill="#a9b1d0"/>
<rect x="1071.8" y="251.2" width="166.7" height="167.0" rx="4.5" fill="url(#gc2)"/>
<rect x="1440.1" y="303.7" width="188.3" height="188.6" rx="9" fill="#000"/>
<rect x="1445.3" y="308.9" width="177.9" height="178.2" rx="6" fill="#a3add2"/>
<rect x="1450.9" y="314.5" width="166.7" height="167.0" rx="4.5" fill="url(#gif)"/>
<rect x="1819.0" y="367.1" width="62.0" height="61.8" rx="3.5" fill="#000"/>
<rect x="1820.5" y="368.6" width="59.0" height="58.8" rx="2.5" fill="#d9b4bc"/>
<rect x="1822.1" y="370.2" width="55.8" height="55.6" rx="1.5" fill="url(#gx)"/>
<rect x="1819.0" y="873.2" width="62.0" height="61.8" rx="3.5" fill="#000"/>
<rect x="1820.5" y="874.7" width="59.0" height="58.8" rx="2.5" fill="#d9b4bc"/>
<rect x="1822.1" y="876.3" width="55.8" height="55.6" rx="1.5" fill="url(#gx)"/></g>
<g><rect x="565.6" y="970.8" width="75.6" height="76.6" rx="4" fill="#000"/>
<rect x="568.1" y="973.3" width="70.6" height="71.6" rx="3" fill="#a9b1d0"/>
<rect x="570.1" y="975.3" width="66.6" height="67.6" rx="2" fill="url(#tb0)"/>
<g transform="translate(645.3 970.4)">
<polygon points="7,0.5 70,0.5 76.5,7 76.5,70 70,76.5 7,76.5 0.5,70 0.5,7" fill="#aab2c0"/>
<polygon points="7,0.5 70,0.5 76.5,7 76.5,68 70,74.5 7,74.5 0.5,68 0.5,7" fill="#dde2ea"/>
<polygon points="7.0,0.5 20.5,0.5 20.5,4.5 22.5,6.5 22.5,14.5 14.5,22.5 6.5,22.5 4.5,20.5 0.5,20.5 0.5,7.0" fill="#f1f3f7" stroke="#c3cad6" stroke-width="0.8"/>
<polygon points="70.0,0.5 56.5,0.5 56.5,4.5 54.5,6.5 54.5,14.5 62.5,22.5 70.5,22.5 72.5,20.5 76.5,20.5 76.5,7.0" fill="#f1f3f7" stroke="#c3cad6" stroke-width="0.8"/>
<polygon points="7.0,74.5 20.5,74.5 20.5,70.5 22.5,68.5 22.5,60.5 14.5,52.5 6.5,52.5 4.5,54.5 0.5,54.5 0.5,68.0" fill="#f1f3f7" stroke="#c3cad6" stroke-width="0.8"/>
<polygon points="70.0,74.5 56.5,74.5 56.5,70.5 54.5,68.5 54.5,60.5 62.5,52.5 70.5,52.5 72.5,54.5 76.5,54.5 76.5,68.0" fill="#f1f3f7" stroke="#c3cad6" stroke-width="0.8"/>
<rect x="27.5" y="0.5" width="22" height="10" fill="#f6f8fb" stroke="#c3cad6" stroke-width="0.8"/>
<rect x="27.5" y="65" width="22" height="9.5" fill="#eef1f6" stroke="#c3cad6" stroke-width="0.8"/>
<rect x="0.5" y="27.5" width="9" height="22" fill="#d5dae4" stroke="#b8c0cc" stroke-width="0.8"/>
<rect x="67.5" y="27.5" width="9" height="22" fill="#d5dae4" stroke="#b8c0cc" stroke-width="0.8"/>
<rect x="23.5" y="-0.5" width="3" height="3" fill="#2f2e33"/><rect x="23.5" y="74" width="3" height="3.5" fill="#2f2e33"/>
<rect x="-0.5" y="23.5" width="3" height="3" fill="#2f2e33"/><rect x="74.5" y="23.5" width="3" height="3" fill="#2f2e33"/>
<rect x="50.5" y="-0.5" width="3" height="3" fill="#2f2e33"/><rect x="50.5" y="74" width="3" height="3.5" fill="#2f2e33"/>
<rect x="-0.5" y="50.5" width="3" height="3" fill="#2f2e33"/><rect x="74.5" y="50.5" width="3" height="3" fill="#2f2e33"/>
<circle cx="38.7" cy="38.4" r="30.6" fill="#b5bcc8"/>
<circle cx="38.7" cy="38.4" r="29.6" fill="#2a303b"/><circle cx="38.7" cy="38.4" r="26.8" fill="url(#gext)"/>
</g>
<rect x="726.3" y="970.8" width="75.6" height="76.6" rx="4" fill="#000"/>
<rect x="728.8" y="973.3" width="70.6" height="71.6" rx="3" fill="#a9b1d0"/>
<rect x="730.8" y="975.3" width="66.6" height="67.6" rx="2" fill="url(#tb2)"/>
<rect x="806.6" y="970.8" width="75.6" height="76.6" rx="4" fill="#000"/>
<rect x="809.1" y="973.3" width="70.6" height="71.6" rx="3" fill="#a9b1d0"/>
<rect x="811.1" y="975.3" width="66.6" height="67.6" rx="2" fill="url(#tb3)"/>
<rect x="886.9" y="970.8" width="75.6" height="76.6" rx="4" fill="#000"/>
<rect x="889.4" y="973.3" width="70.6" height="71.6" rx="3" fill="#a9b1d0"/>
<rect x="891.4" y="975.3" width="66.6" height="67.6" rx="2" fill="url(#tb4)"/>
<rect x="967.2" y="970.8" width="75.6" height="76.6" rx="4" fill="#000"/>
<rect x="969.8" y="973.3" width="70.6" height="71.6" rx="3" fill="#a9b1d0"/>
<rect x="971.8" y="975.3" width="66.6" height="67.6" rx="2" fill="url(#tb5)"/>
<rect x="1047.6" y="970.8" width="75.6" height="76.6" rx="4" fill="#000"/>
<rect x="1050.1" y="973.3" width="70.6" height="71.6" rx="3" fill="#a9b1d0"/>
<rect x="1052.1" y="975.3" width="66.6" height="67.6" rx="2" fill="url(#tb6)"/>
<rect x="1127.9" y="970.8" width="75.6" height="76.6" rx="4" fill="#000"/>
<rect x="1130.4" y="973.3" width="70.6" height="71.6" rx="3" fill="#a9b1d0"/>
<rect x="1132.4" y="975.3" width="66.6" height="67.6" rx="2" fill="url(#tb7)"/>
<rect x="1208.2" y="970.8" width="75.6" height="76.6" rx="4" fill="#000"/>
<rect x="1210.7" y="973.3" width="70.6" height="71.6" rx="3" fill="#a9b1d0"/>
<rect x="1212.7" y="975.3" width="66.6" height="67.6" rx="2" fill="url(#tb8)"/>
<rect x="1288.6" y="970.8" width="75.6" height="76.6" rx="4" fill="#000"/>
<rect x="1291.1" y="973.3" width="70.6" height="71.6" rx="3" fill="#a9b1d0"/>
<rect x="1293.1" y="975.3" width="66.6" height="67.6" rx="2" fill="url(#tb9)"/>
<rect x="1368.9" y="970.8" width="75.6" height="76.6" rx="4" fill="#000"/>
<rect x="1371.4" y="973.3" width="70.6" height="71.6" rx="3" fill="#a9b1d0"/>
<rect x="1373.4" y="975.3" width="66.6" height="67.6" rx="2" fill="url(#tb10)"/></g>
<g style="opacity:0.999"><text class="o" x="144.3" y="770.5" font-size="26" text-anchor="middle">CONST</text>
<text class="f" x="144.3" y="770.5" font-size="26" fill="#fff" stroke="#fff" text-anchor="middle">CONST</text>
<text class="o" x="144.3" y="802.1" font-size="26" text-anchor="middle">1</text>
<text class="f" x="144.3" y="802.1" font-size="26" fill="#fff" stroke="#fff" text-anchor="middle">1</text>
<text class="oa" font-size="40" text-anchor="end" transform="translate(234.0 778.7) scale(0.88 1.13)" x="0" y="11.6">&gt;</text>
<text class="fa" font-size="40" text-anchor="end" transform="translate(234.0 778.7) scale(0.88 1.13)" x="0" y="11.6">&gt;</text>
<text class="o" x="397.0" y="707.2" font-size="26" text-anchor="middle">GATE</text>
<text class="f" x="397.0" y="707.2" font-size="26" fill="#fff" stroke="#fff" text-anchor="middle">GATE</text>
<text class="o" x="397.0" y="738.8" font-size="26" text-anchor="middle">ONCE</text>
<text class="f" x="397.0" y="738.8" font-size="26" fill="#fff" stroke="#fff" text-anchor="middle">ONCE</text>
<text class="oa" font-size="40" text-anchor="end" transform="translate(486.8 715.4) scale(0.88 1.13)" x="0" y="11.6">&gt;</text>
<text class="fa" font-size="40" text-anchor="end" transform="translate(486.8 715.4) scale(0.88 1.13)" x="0" y="11.6">&gt;</text>
<text class="o" x="332.6" y="657.7" font-size="26" text-anchor="middle">C</text>
<text class="f" x="332.6" y="657.7" font-size="26" fill="#fff" stroke="#fff" text-anchor="middle">C</text>
<text class="o" x="332.6" y="789.5" font-size="26" text-anchor="middle">IN</text>
<text class="f" x="332.6" y="789.5" font-size="26" fill="#fff" stroke="#fff" text-anchor="middle">IN</text>
<text class="o" x="776.1" y="580.7" font-size="26" text-anchor="middle">REG</text>
<text class="f" x="776.1" y="580.7" font-size="26" fill="#fff" stroke="#fff" text-anchor="middle">REG</text>
<text class="o" x="776.1" y="612.3" font-size="26" text-anchor="middle">SH2</text>
<text class="f" x="776.1" y="612.3" font-size="26" fill="#fff" stroke="#fff" text-anchor="middle">SH2</text>
<text class="oa" font-size="40" text-anchor="end" transform="translate(865.8 588.9) scale(0.88 1.13)" x="0" y="11.6">&gt;</text>
<text class="fa" font-size="40" text-anchor="end" transform="translate(865.8 588.9) scale(0.88 1.13)" x="0" y="11.6">&gt;</text>
<text class="o" x="711.7" y="531.2" font-size="26" text-anchor="middle">GET</text>
<text class="f" x="711.7" y="531.2" font-size="26" fill="#fff" stroke="#fff" text-anchor="middle">GET</text>
<text class="o" x="840.5" y="531.2" font-size="26" text-anchor="middle">O2</text>
<text class="f" x="840.5" y="531.2" font-size="26" fill="#fff" stroke="#fff" text-anchor="middle">O2</text>
<text class="o" x="711.7" y="597.2" font-size="26" text-anchor="middle">RST</text>
<text class="f" x="711.7" y="597.2" font-size="26" fill="#f05252" stroke="#f05252" text-anchor="middle">RST</text>
<text class="o" x="711.7" y="662.9" font-size="26" text-anchor="middle">PSH</text>
<text class="f" x="711.7" y="662.9" font-size="26" fill="#fff" stroke="#fff" text-anchor="middle">PSH</text>
<text class="o" x="1155.2" y="580.7" font-size="26" text-anchor="middle">MATH</text>
<text class="f" x="1155.2" y="580.7" font-size="26" fill="#fff" stroke="#fff" text-anchor="middle">MATH</text>
<text class="o" x="1155.2" y="612.3" font-size="26" text-anchor="middle">ADD</text>
<text class="f" x="1155.2" y="612.3" font-size="26" fill="#fff" stroke="#fff" text-anchor="middle">ADD</text>
<text class="oa" font-size="40" text-anchor="end" transform="translate(1244.9 588.9) scale(0.88 1.13)" x="0" y="11.6">&gt;</text>
<text class="fa" font-size="40" text-anchor="end" transform="translate(1244.9 588.9) scale(0.88 1.13)" x="0" y="11.6">&gt;</text>
<text class="o" x="1090.8" y="531.2" font-size="26" text-anchor="middle">B</text>
<text class="f" x="1090.8" y="531.2" font-size="26" fill="#fff" stroke="#fff" text-anchor="middle">B</text>
<text class="o" x="1090.8" y="662.9" font-size="26" text-anchor="middle">A</text>
<text class="f" x="1090.8" y="662.9" font-size="26" fill="#fff" stroke="#fff" text-anchor="middle">A</text>
<text class="o" x="1155.2" y="327.6" font-size="26" text-anchor="middle">CONST</text>
<text class="f" x="1155.2" y="327.6" font-size="26" fill="#fff" stroke="#fff" text-anchor="middle">CONST</text>
<text class="o" x="1155.2" y="359.2" font-size="26" text-anchor="middle">20</text>
<text class="f" x="1155.2" y="359.2" font-size="26" fill="#fff" stroke="#fff" text-anchor="middle">20</text>
<text class="oa" font-size="40" text-anchor="end" transform="translate(1244.9 335.8) scale(0.88 1.13)" x="0" y="11.6">&gt;</text>
<text class="fa" font-size="40" text-anchor="end" transform="translate(1244.9 335.8) scale(0.88 1.13)" x="0" y="11.6">&gt;</text>
<text class="o" x="1534.2" y="390.9" font-size="26" text-anchor="middle">IF</text>
<text class="f" x="1534.2" y="390.9" font-size="26" fill="#fff" stroke="#fff" text-anchor="middle">IF</text>
<text class="o" x="1534.2" y="422.5" font-size="26" text-anchor="middle">&lt;=</text>
<text class="f" x="1534.2" y="422.5" font-size="26" fill="#fff" stroke="#fff" text-anchor="middle">&lt;=</text>
<text class="o" x="1469.8" y="341.4" font-size="26" text-anchor="middle">B</text>
<text class="f" x="1469.8" y="341.4" font-size="26" fill="#fff" stroke="#fff" text-anchor="middle">B</text>
<text class="o" x="1469.8" y="473.1" font-size="26" text-anchor="middle">A</text>
<text class="f" x="1469.8" y="473.1" font-size="26" fill="#fff" stroke="#fff" text-anchor="middle">A</text>
<text class="o" x="1598.6" y="341.4" font-size="26" text-anchor="middle">F</text>
<text class="f" x="1598.6" y="341.4" font-size="26" fill="#fff" stroke="#fff" text-anchor="middle">F</text>
<text class="o" x="1598.6" y="407.4" font-size="26" text-anchor="middle">C</text>
<text class="f" x="1598.6" y="407.4" font-size="26" fill="#fff" stroke="#fff" text-anchor="middle">C</text>
<text class="o" x="1598.6" y="473.1" font-size="26" text-anchor="middle">T</text>
<text class="f" x="1598.6" y="473.1" font-size="26" fill="#fff" stroke="#fff" text-anchor="middle">T</text>
<text class="o" x="1850.3" y="406.3" font-size="27" text-anchor="middle">X</text>
<text class="f" x="1850.3" y="406.3" font-size="27" fill="#fff" stroke="#fff" text-anchor="middle">X</text>
<text class="o" x="1850.3" y="912.4" font-size="27" text-anchor="middle">X</text>
<text class="f" x="1850.3" y="912.4" font-size="27" fill="#fff" stroke="#fff" text-anchor="middle">X</text>
<text class="o2" x="1313.4" y="337.8" font-size="21" text-anchor="middle">20</text>
<text class="f" x="1313.4" y="337.8" font-size="21" fill="#fff" stroke="#fff" text-anchor="middle">20</text>
<text class="o2" x="1376.6" y="337.8" font-size="21" text-anchor="middle">20</text>
<text class="f" x="1376.6" y="337.8" font-size="21" fill="#fff" stroke="#fff" text-anchor="middle">20</text>
<text class="o2" x="1439.8" y="337.8" font-size="21" text-anchor="middle">20</text>
<text class="f" x="1439.8" y="337.8" font-size="21" fill="#fff" stroke="#fff" text-anchor="middle">20</text>
<text class="o2" x="301.9" y="779.9" font-size="21" text-anchor="middle">1</text>
<text class="f" x="301.9" y="779.9" font-size="21" fill="#fff" stroke="#fff" text-anchor="middle">1</text>
<text class="t" x="106.8" y="156.6" font-size="51" fill="#52e0dc" text-anchor="start">Fibonacci sequence</text>
<text x="603.4" y="1007.3" font-size="18" fill="#f0f0f0" text-anchor="middle" class="s so">BELT</text>
<text x="684.0" y="1025.2" font-size="11.9" fill="#8a8682" text-anchor="middle" class="s">EXT</text>
<text x="764.1" y="1007.3" font-size="18" fill="#f0f0f0" text-anchor="middle" class="s so">MATH</text>
<text x="764.1" y="1024.8" font-size="10.5" fill="#8a8a8a" text-anchor="middle" class="s so2">+ - * /</text>
<text x="844.4" y="1007.3" font-size="18" fill="#f0f0f0" text-anchor="middle" class="s so">IF</text>
<text x="844.4" y="1024.8" font-size="10.5" fill="#8a8a8a" text-anchor="middle" class="s so2">= &lt; &gt;</text>
<text x="924.7" y="1007.3" font-size="18" fill="#f0f0f0" text-anchor="middle" class="s so">LOGIC</text>
<text x="924.7" y="1024.8" font-size="10.5" fill="#8a8a8a" text-anchor="middle" class="s so2">AND OR XOR</text>
<text x="1005.0" y="1007.3" font-size="18" fill="#f0f0f0" text-anchor="middle" class="s so">REG</text>
<text x="1005.0" y="1024.8" font-size="10.5" fill="#8a8a8a" text-anchor="middle" class="s so2">STORE</text>
<text x="1085.4" y="1007.3" font-size="18" fill="#f0f0f0" text-anchor="middle" class="s so">CNT</text>
<text x="1085.4" y="1025.3" font-size="11" fill="#8f8a92" text-anchor="middle" class="s">ON</text>
<text x="1165.7" y="1007.3" font-size="18" fill="#f0f0f0" text-anchor="middle" class="s so">DELAY</text>
<text x="1165.7" y="1025.3" font-size="11" fill="#8f8a92" text-anchor="middle" class="s">1 TICK</text>
<text x="1246.0" y="1007.3" font-size="18" fill="#f0f0f0" text-anchor="middle" class="s so">CONST</text>
<text x="1246.0" y="1025.3" font-size="11" fill="#8f8a92" text-anchor="middle" class="s">GEN</text>
<text x="1326.4" y="1007.3" font-size="18" fill="#f0f0f0" text-anchor="middle" class="s so">RND</text>
<text x="1326.4" y="1025.3" font-size="11" fill="#8f8a92" text-anchor="middle" class="s">1-999</text>
<text x="1406.7" y="1007.3" font-size="18" fill="#f0f0f0" text-anchor="middle" class="s so">GATE</text>
<text x="1406.7" y="1024.8" font-size="10.5" fill="#8a8a8a" text-anchor="middle" class="s so2">VALVE</text></g>
</svg>
</body></html>
